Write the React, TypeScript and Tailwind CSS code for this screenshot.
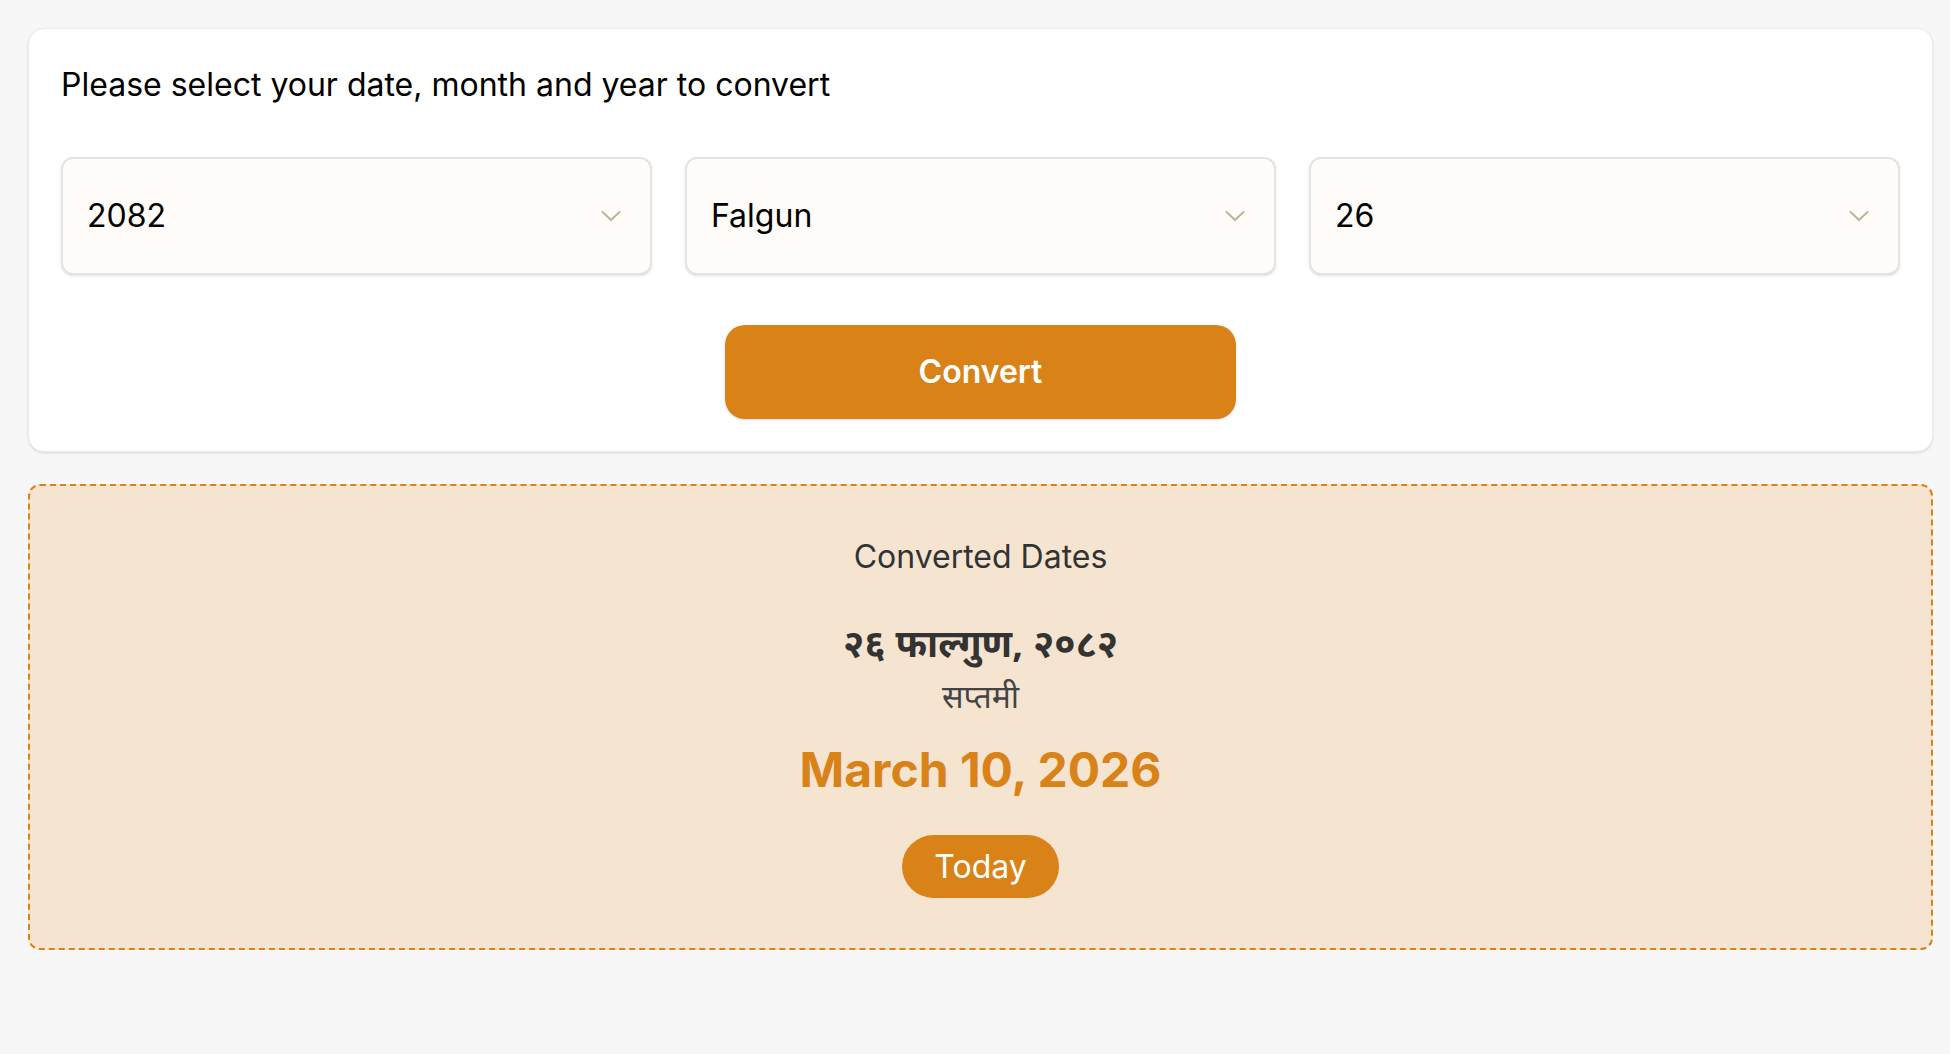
import { useState } from "react";

const years = ["2080", "2081", "2082", "2083"];
const months = [
  "Baishakh",
  "Jestha",
  "Asar",
  "Shrawan",
  "Bhadra",
  "Asoj",
  "Kartik",
  "Mangsir",
  "Poush",
  "Magh",
  "Falgun",
  "Chaitra",
];
const days = Array.from({ length: 32 }, (_, i) => String(i + 1));

function Chevron() {
  return (
    <svg
      width="20"
      height="11"
      viewBox="0 0 20 11"
      fill="none"
      className="pointer-events-none absolute right-[31px] top-1/2 -translate-y-1/2"
    >
      <path
        d="M1.5 1.5L10 9.5L18.5 1.5"
        stroke="#c2b19c"
        strokeWidth="2"
        strokeLinecap="round"
        strokeLinejoin="round"
      />
    </svg>
  );
}

function DateSelect({
  value,
  options,
  onChange,
}: {
  value: string;
  options: string[];
  onChange: (v: string) => void;
}) {
  return (
    <div className="relative">
      <select
        value={value}
        onChange={(e) => onChange(e.target.value)}
        className="h-[118px] w-full appearance-none rounded-xl border-2 border-[#e6e3e0] bg-[#fffbf8] pl-[24px] text-[32px] text-black shadow-sm outline-none"
      >
        {options.map((o) => (
          <option key={o} value={o}>
            {o}
          </option>
        ))}
      </select>
      <Chevron />
    </div>
  );
}

export default function App() {
  const [year, setYear] = useState("2082");
  const [month, setMonth] = useState("Falgun");
  const [day, setDay] = useState("26");

  return (
    <div className="min-h-screen bg-[#f7f7f7] pl-7 pr-[17px] pt-7 font-['Inter',sans-serif]">
      <div className="rounded-2xl border border-[#ececec] bg-white px-8 pb-8 pt-[37px] shadow-sm">
        <p className="text-[32px] leading-[38px] text-black">
          Please select your date, month and year to convert
        </p>
        <div className="mt-[53px] grid grid-cols-3 gap-[33px]">
          <DateSelect value={year} options={years} onChange={setYear} />
          <DateSelect value={month} options={months} onChange={setMonth} />
          <DateSelect value={day} options={days} onChange={setDay} />
        </div>
        <button className="mx-auto mt-[50px] block h-[94px] w-[511px] rounded-[20px] bg-[#d98218] text-[32px] font-semibold text-white shadow-sm">
          Convert
        </button>
      </div>

      <div className="mt-8 flex flex-col items-center rounded-xl border-2 border-dashed border-[#d98218] bg-[#f5e4d0] pb-[50px] pt-[51px] text-center">
        <p className="text-[32px] leading-[40px] text-[#333333]">Converted Dates</p>
        <p className="mt-[39px] font-['Noto_Sans','Noto_Sans_Devanagari',sans-serif] text-[38px] font-bold leading-[52px] text-[#333333]">
          २६ फाल्गुण, २०८२
        </p>
        <p className="mt-[6px] font-['Noto_Sans','Noto_Sans_Devanagari',sans-serif] text-[32px] leading-[44px] text-[#444444]">
          सप्तमी
        </p>
        <p className="mt-[23px] text-[48px] font-bold leading-[58px] text-[#d98218]">
          March 10, 2026
        </p>
        <button className="mt-[36px] h-[63px] rounded-full bg-[#d98218] px-8 text-[32px] text-white">
          Today
        </button>
      </div>
    </div>
  );
}
